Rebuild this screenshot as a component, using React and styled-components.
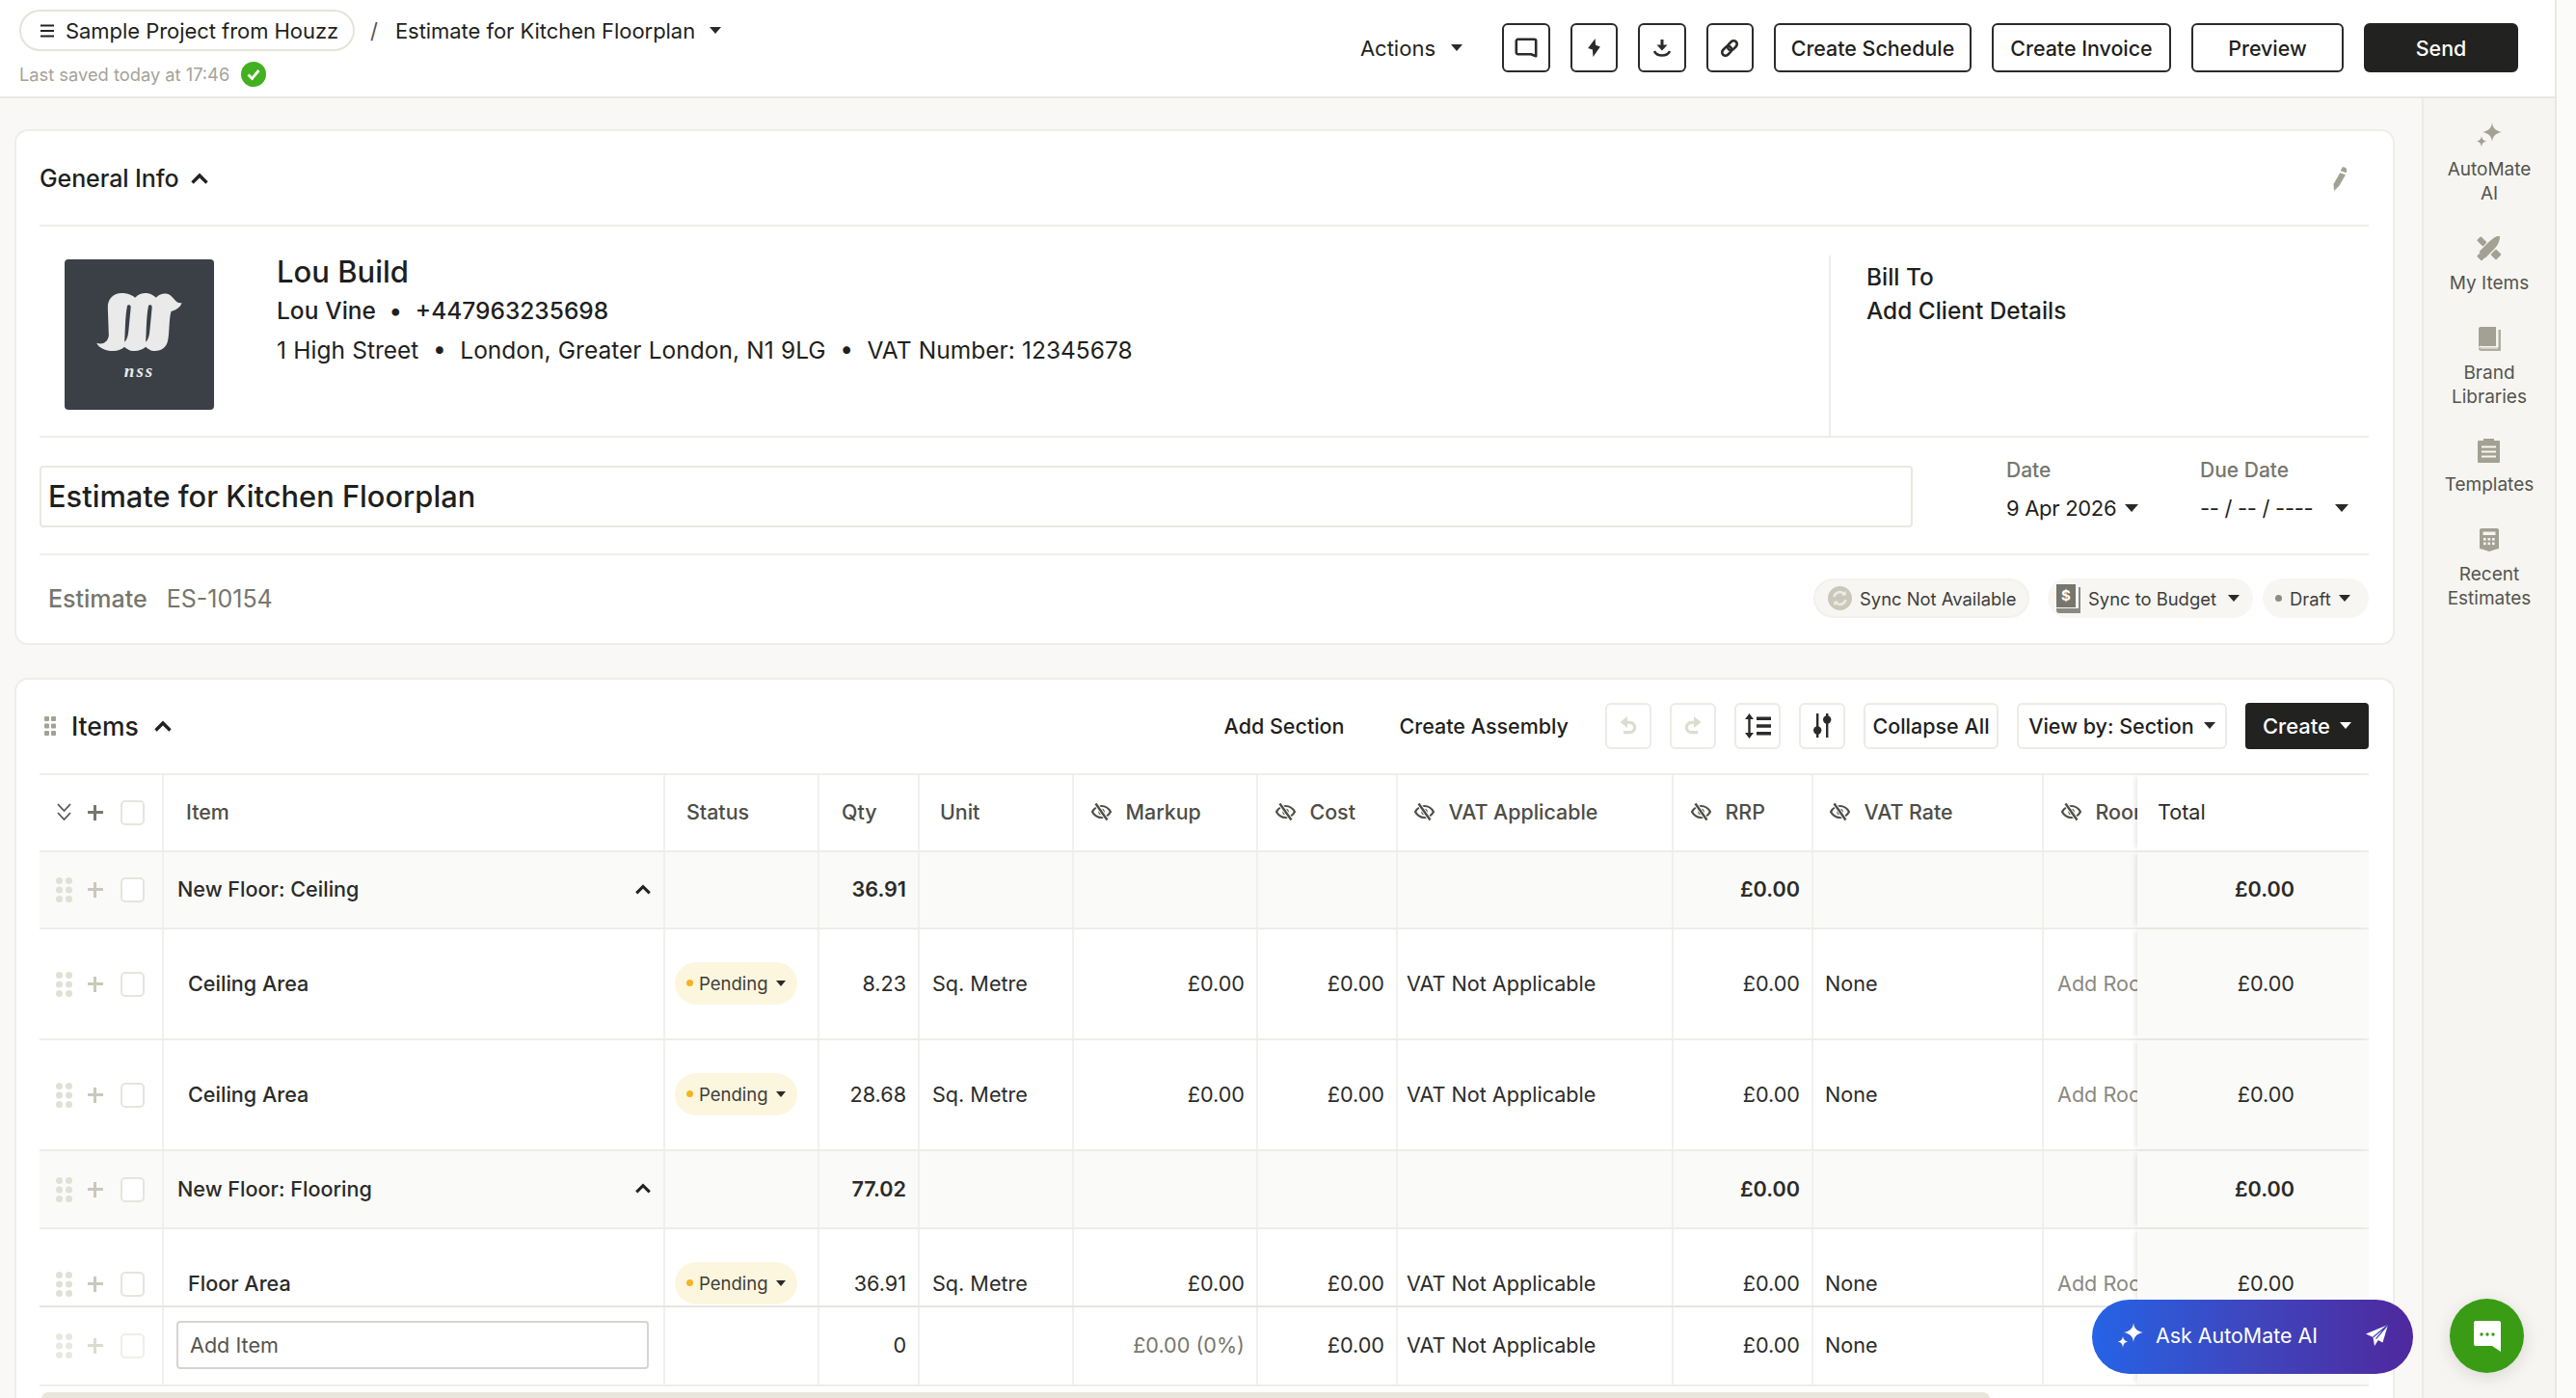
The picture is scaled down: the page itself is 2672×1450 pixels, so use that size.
import React from 'react';
import styled, { createGlobalStyle } from 'styled-components';

const Global = createGlobalStyle`
  html, body { margin: 0; padding: 0; height: 1450px; overflow: hidden; background: #fbfbfa; }
  * { box-sizing: border-box; }
  body { font-family: "Inter", "Noto Sans", sans-serif; color: #1f1f1d; }
`;

const Page = styled.div`display:flex;width:2672px;height:1450px;overflow:hidden;position:relative;`;
const Workspace = styled.div`width:2652px;height:1450px;display:flex;flex-direction:column;border-right:2px solid #e8e7e3;`;
const Header = styled.header`height:102px;flex:none;background:#fff;border-bottom:2px solid #e8e7e3;display:flex;justify-content:space-between;padding:10px 38px 0 20px;`;
const HeaderLeft = styled.div`display:flex;flex-direction:column;gap:10px;`;
const Crumbs = styled.div`display:flex;align-items:center;height:43px;`;
const ProjectPill = styled.div`height:43px;width:348px;border:2px solid #e6e4da;border-radius:22px;display:flex;align-items:center;padding-left:18px;gap:10px;font-size:22px;letter-spacing:-.05px;`;
const Slash = styled.span`margin:0 18px 0 16px;font-size:22px;color:#55544e;`;
const CrumbText = styled.span`font-size:22px;letter-spacing:-.05px;`;
const Caret = styled.span`display:inline-block;width:0;height:0;flex:none;border-left:${p=>p.$s||6}px solid transparent;border-right:${p=>p.$s||6}px solid transparent;border-top:${p=>(p.$s||6)+1}px solid ${p=>p.$c||'#2a2a28'};margin-left:${p=>p.$m||0}px;`;
const Saved = styled.div`display:flex;align-items:center;gap:12px;font-size:18.3px;color:#a5a398;height:28px;`;
const HeaderRight = styled.div`display:flex;align-items:center;height:51px;margin-top:14px;gap:21px;`;
const ActionsBtn = styled.div`display:flex;align-items:center;font-size:22px;margin-right:20px;`;
const OutBtn = styled.div`height:51px;width:${p=>p.$w}px;border:2px solid #2b2b29;border-radius:6px;display:flex;align-items:center;justify-content:center;background:#fff;font-size:21.4px;font-weight:500;`;
const SendBtn = styled(OutBtn)`background:#222220;border-color:#222220;color:#fff;`;

const Body = styled.div`flex:1;display:flex;min-height:0;background:#f9f8f6;`;
const Content = styled.main`flex:1;padding:32px 28px 0 15px;display:flex;flex-direction:column;gap:34px;min-width:0;`;
const Card = styled.section`background:#fff;border:2px solid #eeede8;border-radius:14px;padding:0 25px 0 24px;`;
const InfoCard = styled(Card)`height:535px;flex:none;padding-top:1px;`;
const InfoHead = styled.div`height:98px;display:flex;align-items:center;justify-content:space-between;border-bottom:2px solid #eeede9;padding-right:22px;`;
const Title = styled.div`display:flex;align-items:center;gap:12px;font-size:25px;font-weight:500;letter-spacing:-.1px;`;
const Company = styled.div`height:219px;display:flex;border-bottom:2px solid #eeede9;`;
const Logo = styled.div`width:155px;height:156px;margin:34px 0 0 26px;background:#3a4046;border-radius:4px;flex:none;display:flex;flex-direction:column;align-items:center;justify-content:flex-start;padding-top:34px;`;
const LogoText = styled.span`font-family:"Liberation Serif",serif;font-style:italic;font-weight:700;font-size:19px;letter-spacing:2px;color:#e9e9e9;margin-top:9px;line-height:22px;`;
const CompanyText = styled.div`width:1675px;padding:26px 0 0 65px;flex:none;`;
const CoName = styled.div`font-size:31px;font-weight:500;line-height:41px;`;
const CoLine = styled.div`font-size:${p=>p.$fs||24.5}px;font-weight:${p=>p.$w||400};line-height:41px;white-space:pre;word-spacing:.4px;`;
const BillTo = styled.div`margin-top:30px;height:189px;flex:1;border-left:2px solid #eeede9;padding:0 0 0 37px;font-size:24.4px;font-weight:500;line-height:35px;`;
const BillInner = styled.div`padding-top:5px;`;
const TitleRow = styled.div`height:122px;display:flex;border-bottom:2px solid #eeede9;`;
const TitleInput = styled.div`width:1943px;height:64px;margin-top:29px;border:2px solid #e9e8e2;border-radius:4px;display:flex;align-items:center;padding:0 0 2px 7px;font-size:30.8px;font-weight:500;`;
const DateCol = styled.div`width:${p=>p.$w}px;margin-left:${p=>p.$ml||0}px;padding-top:17px;`;
const DateLabel = styled.div`font-size:21px;font-weight:500;color:#77766c;line-height:34px;`;
const DateVal = styled.div`display:flex;align-items:center;font-size:22px;letter-spacing:-.3px;line-height:44px;color:${p=>p.$c||'#1f1f1d'};white-space:pre;`;
const MetaRow = styled.div`height:91px;display:flex;align-items:center;padding-bottom:2px;`;
const EstLabel = styled.span`font-size:25px;font-weight:500;color:#77766c;margin-left:9px;`;
const EstNum = styled.span`font-size:25px;color:#77766c;margin-left:20px;`;
const Pills = styled.div`margin-left:auto;display:flex;gap:${p=>p.$g||0}px;align-items:center;`;
const Pill = styled.div`height:41px;border-radius:21px;background:${p=>p.$bg||'#f7f6f3'};width:${p=>p.$w}px;display:flex;align-items:center;padding-left:${p=>p.$pl||10}px;gap:8px;font-size:18.4px;color:#3e3d39;margin-left:${p=>p.$ml||0}px;border:${p=>p.$b?'2px solid #f2f1ec':'0'};`;

const ItemsCard = styled(Card)`flex:1;border-bottom:0;border-radius:14px 14px 0 0;min-height:0;display:flex;flex-direction:column;`;
const ItemsBar = styled.div`height:97px;flex:none;display:flex;align-items:center;padding-bottom:2px;`;
const ItemsTitle = styled.div`display:flex;align-items:center;font-size:26.500px;font-weight:500;margin-left:4px;gap:15px;`;
const BarRight = styled.div`margin-left:auto;display:flex;align-items:center;height:48px;`;
const TextBtn = styled.span`font-size:21.5px;font-weight:500;margin-right:${p=>p.$mr}px;`;
const GhostBtn = styled.div`height:48px;width:${p=>p.$w}px;margin-right:${p=>p.$mr??19}px;border:2px solid #ecebe5;border-radius:6px;background:#fff;display:flex;align-items:center;justify-content:center;font-size:21.5px;font-weight:500;gap:10px;color:${p=>p.$c||'#1f1f1d'};`;
const CreateBtn = styled.div`height:48px;width:128px;background:#222220;border-radius:4px;color:#fff;display:flex;align-items:center;justify-content:center;gap:10px;font-size:22px;font-weight:500;`;

const cols = '129px 520px 160px 104px 160px 191px 145px 286px 145px 239px 97px 240px';
const Table = styled.div`width:2416px;border-top:2px solid #eeede9;flex:none;`;
const Row = styled.div`display:grid;grid-template-columns:${cols};height:${p=>p.$h}px;background:${p=>p.$bg||'#fff'};border-bottom:2px solid #eeede9;`;
const Cell = styled.div`border-right:2px solid #f1f0ec;display:flex;align-items:center;overflow:hidden;white-space:nowrap;font-size:21.6px;min-width:0;
  justify-content:${p=>p.$right?'flex-end':'flex-start'};
  padding:${p=>p.$right?'0 12px 2px 0':`0 0 2px ${p.$pl||0}px`};
  font-weight:${p=>p.$w||400};
  color:${p=>p.$c||'#2b2b29'};`;
const TotalCell = styled.div`margin-left:0;background:${p=>p.$bg||'#fafaf8'};box-shadow:-4px 0 5px -2px rgba(0,0,0,.1);display:flex;align-items:center;font-size:21.6px;font-weight:${p=>p.$w||400};z-index:1;color:#2b2b29;
  justify-content:${p=>p.$head?'flex-start':'flex-end'};padding:${p=>p.$head?'0 0 2px 21px':'0 77px 2px 0'};`;
const HeadCell = styled(Cell)`font-size:21.4px;color:#4e4d47;font-weight:500;gap:14.500px;`;
const Ctrl = styled.div`border-right:2px solid #f1f0ec;display:flex;align-items:center;padding-left:17px;`;
const Plus = styled.span`width:20px;height:20px;margin-left:14px;flex:none;position:relative;
  &::before,&::after{content:"";position:absolute;background:${p=>p.$c};}
  &::before{left:8px;top:2px;width:3px;height:16px;}
  &::after{top:8px;left:2px;height:3px;width:16px;}`;
const Check = styled.span`width:25px;height:26px;border:2px solid ${p=>p.$c||'#e6e5de'};border-radius:5px;background:#fff;margin-left:16px;flex:none;`;
const RowsClip = styled.div`height:470px;overflow:hidden;`;
const AddInput = styled.div`width:490px;height:50px;margin-left:13px;border:2px solid #d6d5d1;border-radius:4px;display:flex;align-items:center;padding-left:12px;color:#55544e;font-size:21.6px;background:#fff;`;
const StatusPill = styled.div`width:127px;height:44px;margin-left:10px;border-radius:22px;background:#fdf6df;display:flex;align-items:center;padding-left:12px;font-size:18.5px;color:#3e3d39;gap:6px;`;
const Dot = styled.span`width:7px;height:7px;border-radius:50%;background:${p=>p.$c||'#f6b321'};flex:none;`;
const ScrollTrack = styled.div`height:14px;margin-top:6px;width:2021px;margin-left:2px;background:#e8e6dd;border-radius:7px;flex:none;`;

const Side = styled.aside`width:138px;flex:none;background:#f6f5f2;border-left:2px solid #ecebe7;padding-top:21px;display:flex;flex-direction:column;align-items:center;`;
const SideItem = styled.div`display:flex;flex-direction:column;align-items:center;text-align:center;font-size:19px;line-height:25px;color:#55544e;margin-bottom:${p=>p.$mb}px;`;
const SideIcon = styled.div`height:34px;display:flex;align-items:center;justify-content:center;margin-bottom:6px;`;

const AskBtn = styled.div`position:absolute;left:2170px;top:1348px;width:333px;height:77px;border-radius:39px;background:linear-gradient(90deg,#2563e6 0%,#3f46bd 50%,#4f289e 100%);color:#fff;display:flex;align-items:center;padding:0 0 3px 26px;font-size:21.4px;z-index:3;gap:12px;`;
const AskSend = styled.span`margin-left:auto;margin-right:24px;display:flex;`;
const ChatBtn = styled.div`position:absolute;left:2541px;top:1347px;width:77px;height:77px;border-radius:50%;background:#3a9c14;box-shadow:0 4px 18px rgba(0,0,0,.12);display:flex;align-items:center;justify-content:center;z-index:3;`;

const Chevron = ({s=20,c='#222'}) => (
  <svg width={s} height={s*0.7} viewBox="0 0 20 14" style={{flex:'none'}}><path d="M2.500 11.500 10 4l7.500 7.500" fill="none" stroke={c} strokeWidth="3.400"/></svg>
);
const MenuIcon = () => (<svg width="18" height="16" viewBox="0 0 18 16" style={{flex:'none'}}><path d="M2 2.500h14M2 8h14M2 13.500h14" stroke="#222" strokeWidth="2"/></svg>);
const SavedCheck = () => (<svg width="26" height="26" viewBox="0 0 26 26"><circle cx="13" cy="13" r="13" fill="#43b01f"/><path d="M7.500 13.500l4 4 7-8.500" fill="none" stroke="#fff" strokeWidth="2.800"/></svg>);
const CommentI = () => (<svg width="24" height="22" viewBox="0 0 24 22"><path d="M3.500 1.800h17a1.700 1.700 0 0 1 1.700 1.700v15.800l-5.200-2.100H3.500a1.700 1.700 0 0 1-1.700-1.700V3.500a1.700 1.700 0 0 1 1.700-1.700z" fill="none" stroke="#2b2b29" strokeWidth="2.600" strokeLinejoin="round"/></svg>);
const BoltI = () => (<svg width="13" height="19" viewBox="0 0 12 18"><path d="M7 0 0 9.500l4.500 1.500L5 18l7-10-4.500-1.500z" fill="#2b2b29"/></svg>);
const DownloadI = () => (<svg width="18" height="18" viewBox="0 0 18 18"><path d="M7.500 0h3v5.500h4L9 11.500 3.500 5.500h4z" fill="#2b2b29"/><path d="M1 12c1.500 3 4 4.500 8 4.500s6.500-1.500 8-4.500" fill="none" stroke="#2b2b29" strokeWidth="2.600"/></svg>);
const LinkI = () => (<svg width="20" height="20" viewBox="0 0 20 20" fill="none" stroke="#2b2b29" strokeWidth="2.600"><g transform="rotate(-45 10 10)"><rect x="0.500" y="6.500" width="11" height="7" rx="3.500"/><rect x="8.500" y="6.500" width="11" height="7" rx="3.500"/></g></svg>);
const PencilI = () => (<svg width="16" height="25" viewBox="0 0 16 25"><path d="M10.500.500c2.500-1 5 .8 4.700 3.200l-.6 2.500-5.800-1.900zM8.200 6.300l5.800 1.900L7.200 20 2 25l-.5-7z" fill="#a3a193"/></svg>);
const Drag = ({c='#e1e0d6'}) => (
  <svg width="17" height="26" viewBox="0 0 17 26" style={{flex:'none'}}>
    {[0,1,2].flatMap(r=>[0,1].map(k=><circle key={`${r}${k}`} cx={3.500+k*10} cy={3.500+r*9.500} r="3.500" fill={c}/>))}
  </svg>
);
const SmallDrag = () => (
  <svg width="14" height="22" viewBox="0 0 14 22" style={{flex:'none'}}>
    {[0,1,2].flatMap(r=>[0,1].map(k=><rect key={`${r}${k}`} x={1+k*7} y={1+r*7.500} width="5" height="5" rx="1" fill="#a3a193"/>))}
  </svg>
);
const DblChevron = () => (<svg width="17" height="22" viewBox="0 0 17 22" fill="none" stroke="#55544e" strokeWidth="1.800" style={{flex:'none'}}><path d="M2 2l6.500 7L15 2M2 11l6.500 7L15 11"/></svg>);
const EyeOff = () => (
  <svg width="21" height="20" viewBox="0 0 21 20" style={{flex:'none'}}>
    <path d="M1 10c2.300-4 5.600-6 9.500-6s7.200 2 9.500 6c-2.300 4-5.600 6-9.500 6S3.300 14 1 10z" fill="none" stroke="#4e4d47" strokeWidth="2.200"/>
    <circle cx="10.500" cy="10" r="3.200" fill="#4e4d47"/>
    <path d="M4.500 1.500l12 17" stroke="#fff" strokeWidth="4.500"/>
    <path d="M4.500 1.500l12 17" stroke="#4e4d47" strokeWidth="2.400"/>
  </svg>
);
const Undo = ({flip}) => (<svg width="20" height="24" viewBox="0 0 20 24" style={{transform:flip?'scaleX(-1)':'none'}}><path d="M9 2 1.500 8 9 14V10h2.500a3.500 3.500 0 0 1 0 7H5v3.200h6.500a6.700 6.700 0 0 0 0-13.400H9z" fill="#dddcd0"/></svg>);
const RowHeightI = () => (<svg width="30" height="28" viewBox="0 0 30 28"><path d="M6.500 1 2 7h3.300v14H2l4.500 6 4.500-6H7.700V7H11z" fill="#2b2b29"/><path d="M14 4.500h15v3.400H14zM14 12.300h15v3.400H14zM14 20.100h15v3.400H14z" fill="#2b2b29"/></svg>);
const SortI = () => (<svg width="20" height="26" viewBox="0 0 20 26" fill="#2b2b29"><rect x="4" y="0" width="2.400" height="25"/><rect x="14" y="0" width="2.400" height="25"/><circle cx="5.200" cy="17.500" r="4.200"/><circle cx="15.200" cy="6.500" r="4.200"/></svg>);
const Sparkle = ({c='#a3a193',s=28}) => (<svg width={s} height={s} viewBox="0 0 28 28" style={{flex:'none'}}><path d="M17 1c.6 5.400 3.200 8.600 10 10-6.800 1.400-9.400 4.600-10 10-.6-5.400-3.200-8.600-10-10 6.800-1.400 9.400-4.600 10-10z" fill={c}/><path d="M6 15c.3 2.900 1.600 4.600 5 5.500-3.400.9-4.700 2.600-5 6.500-.3-3.900-1.600-5.600-5-6.500 3.400-.9 4.700-2.600 5-5.500z" fill={c}/></svg>);
const ItemsI = () => (<svg width="27" height="26" viewBox="0 0 27 26" fill="#a3a193"><path d="M26 0c.3 5-1.700 10-5.600 14L11 23.500 4.500 17 14 7.600C18 3.700 21.500 1 26 0z" transform="translate(-1 -1)"/><rect x="2" y="2" width="9" height="6" rx="1" transform="rotate(45 6 5)"/><rect x="17" y="15" width="8" height="8" rx="1" transform="rotate(45 21 19)"/><rect x="3" y="17" width="7" height="7" rx="1" transform="rotate(45 6 20)"/></svg>);
const BookI = () => (<svg width="25" height="25" viewBox="0 0 25 25"><path d="M3 0h16v20H4.500A3.500 3.500 0 0 0 1 21V2a2 2 0 0 1 2-2z" fill="#a3a193"/><path d="M21.500 3H24v22H3.500C2 25 1 24 1 22.500 1 21.600 2 21.200 3.500 21.200h18z" fill="#a3a193" opacity=".85"/><path d="M3 22h18" stroke="#f6f5f2" strokeWidth="1"/></svg>);
const ClipI = () => (<svg width="23" height="25" viewBox="0 0 23 25"><path d="M1 2h5V0h11v2h5a1 1 0 0 1 1 1v21a1 1 0 0 1-1 1H1a1 1 0 0 1-1-1V3a1 1 0 0 1 1-1z" fill="#a3a193"/><path d="M4 8.500h15M4 13.500h15M4 18.500h15" stroke="#f6f5f2" strokeWidth="2"/></svg>);
const CalcI = () => (<svg width="20" height="24" viewBox="0 0 20 24"><path d="M2 0h16a2 2 0 0 1 2 2v19l-4 1-6 2-6-2-4-1V2a2 2 0 0 1 2-2z" fill="#a3a193"/><rect x="3.500" y="3.500" width="13" height="3.500" fill="#f6f5f2"/>{[0,1,2].flatMap(k=>[0,1].map(r=><rect key={`${k}${r}`} x={4+k*4.500} y={10+r*4.500} width="2.600" height="2.600" fill="#f6f5f2"/>))}</svg>);
const SyncI = () => (<svg width="25" height="25" viewBox="0 0 25 25"><circle cx="12.500" cy="12.500" r="12.500" fill="#c9c8ba"/><path d="M6.500 11a6.200 6.200 0 0 1 11-2.500M18.500 14a6.200 6.200 0 0 1-11 2.500" fill="none" stroke="#ecebe4" strokeWidth="2.400"/><path d="M18.800 4.500v5h-5zM6.200 20.500v-5h5z" fill="#ecebe4"/></svg>);
const BudgetI = () => (<svg width="25" height="30" viewBox="0 0 25 30"><path d="M0 0h20v24H0z" fill="#77766c"/><path d="M23 3h2v27H3a3 3 0 0 1-3-3v-2h23z" fill="#8b8a80"/><text x="10" y="17" textAnchor="middle" fontSize="15" fontWeight="700" fill="#fff" fontFamily="Inter, sans-serif">$</text></svg>);
const PlaneI = () => (<svg width="26" height="26" viewBox="0 0 26 26"><path d="M24 2 1 11.500l7.500 3.500L10 24l3.800-6 4.700 2.500z" fill="#fff"/><path d="M8.500 15 24 2 11.500 16.700" fill="none" stroke="#3f46bd" strokeWidth="1.200"/></svg>);
const ChatI = () => (<svg width="30" height="34" viewBox="0 0 30 34"><path d="M3 1h24a2 2 0 0 1 2 2v30l-9-6H3a2 2 0 0 1-2-2V3a2 2 0 0 1 2-2z" fill="#fff"/><circle cx="9" cy="15" r="1.700" fill="#3a9c14"/><circle cx="15" cy="15" r="1.700" fill="#3a9c14"/><circle cx="21" cy="15" r="1.700" fill="#3a9c14"/></svg>);

const LogoMark = () => (
  <svg width="89" height="62" viewBox="183 155 266 186" style={{flex:'none'}}>
    <path fill="#eaeaea" d="M183 313C200 320 218 312 221 290L218 205C216 180 232 158 262 158C280 158 295 165 303 172C312 162 325 158 335 158C350 158 360 165 368 172C378 162 390 158 402 160C420 162 430 195 448 188C444 205 425 212 415 215C408 240 410 280 405 305C400 328 385 338 365 338C350 338 342 330 336 325C328 332 315 338 300 338C285 338 275 330 270 325C262 332 250 338 235 338C210 338 190 328 183 313Z"/>
    <path fill="#3a4046" d="M283 195C290 195 290 200 289 208L282 280C280 295 276 305 270 310C272 280 272 230 278 200C279 196 281 195 283 195Z"/>
    <path fill="#3a4046" d="M349 195C356 195 356 200 355 208L348 280C346 295 342 305 336 310C338 280 338 230 344 200C345 196 347 195 349 195Z"/>
  </svg>
);

const ControlCells = ({drag='#e1e0d6',plus='#c9c8ba',check}) => (
  <Ctrl><Drag c={drag}/><Plus $c={plus}/><Check $c={check}/></Ctrl>
);
const AmountRow = ({kind, name, qty, h}) => {
  const section = kind === 'section';
  return (
    <Row $h={h} $bg={section?'#fafaf8':'#fff'}>
      <ControlCells />
      {section
        ? <Cell $pl={14} $w={500} style={{justifyContent:'space-between',paddingRight:12}}>{name}<Chevron s={18}/></Cell>
        : <Cell $pl={25} $w={500}>{name}</Cell>}
      <Cell>{!section && <StatusPill><Dot/>Pending<Caret $s={5} $m={2}/></StatusPill>}</Cell>
      <Cell $right $w={section?600:400}>{qty}</Cell>
      <Cell $pl={13}>{!section && 'Sq. Metre'}</Cell>
      <Cell $right>{!section && '£0.00'}</Cell>
      <Cell $right>{!section && '£0.00'}</Cell>
      <Cell $pl={9}>{!section && 'VAT Not Applicable'}</Cell>
      <Cell $right $w={section?600:400}>£0.00</Cell>
      <Cell $pl={12}>{!section && 'None'}</Cell>
      <Cell $pl={14} $c="#8a897f" style={{borderRight:0}}>{!section && 'Add Room'}</Cell>
      <TotalCell $w={section?600:400}>£0.00</TotalCell>
    </Row>
  );
};

export default function App(){
  const head = [['Status',0,22],['Qty',0,23],['Unit',0,21],['Markup',1,18],['Cost',1,18],['VAT Applicable',1,17],['RRP',1,18],['VAT Rate',1,17],['Room',1,18]];
  return (
    <Page>
      <Global/>
      <Workspace>
        <Header>
          <HeaderLeft>
            <Crumbs>
              <ProjectPill><MenuIcon/>Sample Project from Houzz</ProjectPill>
              <Slash>/</Slash>
              <CrumbText>Estimate for Kitchen Floorplan</CrumbText>
              <Caret $m={15}/>
            </Crumbs>
            <Saved>Last saved today at 17:46 <SavedCheck/></Saved>
          </HeaderLeft>
          <HeaderRight>
            <ActionsBtn>Actions<Caret $m={16}/></ActionsBtn>
            <OutBtn $w={49.5}><CommentI/></OutBtn>
            <OutBtn $w={49.5}><BoltI/></OutBtn>
            <OutBtn $w={49.5}><DownloadI/></OutBtn>
            <OutBtn $w={49.5}><LinkI/></OutBtn>
            <OutBtn $w={205}>Create Schedule</OutBtn>
            <OutBtn $w={186}>Create Invoice</OutBtn>
            <OutBtn $w={158}>Preview</OutBtn>
            <SendBtn $w={160}>Send</SendBtn>
          </HeaderRight>
        </Header>
        <Body>
          <Content>
            <InfoCard>
              <InfoHead>
                <Title>General Info <Chevron/></Title>
                <PencilI/>
              </InfoHead>
              <Company>
                <Logo><LogoMark/><LogoText>nss</LogoText></Logo>
                <CompanyText>
                  <CoName>Lou Build</CoName>
                  <CoLine $fs={24.5} $w={500}>{'Lou Vine  •  +447963235698'}</CoLine>
                  <CoLine>{'1 High Street  •  London, Greater London, N1 9LG  •  VAT Number: 12345678'}</CoLine>
                </CompanyText>
                <BillTo><BillInner>Bill To<br/>Add Client Details</BillInner></BillTo>
              </Company>
              <TitleRow>
                <TitleInput>Estimate for Kitchen Floorplan</TitleInput>
                <DateCol $w={201} $ml={97}>
                  <DateLabel>Date</DateLabel>
                  <DateVal>9 Apr 2026<Caret $m={9} $s={7}/></DateVal>
                </DateCol>
                <DateCol $w={165}>
                  <DateLabel>Due Date</DateLabel>
                  <DateVal>{'-- / -- / ----'}<Caret $m={23} $s={7}/></DateVal>
                </DateCol>
              </TitleRow>
              <MetaRow>
                <EstLabel>Estimate</EstLabel>
                <EstNum>ES-10154</EstNum>
                <Pills>
                  <Pill $w={224} $b $pl={13}><SyncI/>Sync Not Available</Pill>
                  <Pill $w={213} $ml={19} $pl={9}><BudgetI/>Sync to Budget<Caret $s={6} $m={4}/></Pill>
                  <Pill $w={110} $ml={10} $pl={13}><Dot $c="#8e8d83"/>Draft<Caret $s={6}/></Pill>
                </Pills>
              </MetaRow>
            </InfoCard>
            <ItemsCard>
              <ItemsBar>
                <ItemsTitle><SmallDrag/>Items<Chevron s={20}/></ItemsTitle>
                <BarRight>
                  <TextBtn $mr={57}>Add Section</TextBtn>
                  <TextBtn $mr={38}>Create Assembly</TextBtn>
                  <GhostBtn $w={48}><Undo/></GhostBtn>
                  <GhostBtn $w={48}><Undo flip/></GhostBtn>
                  <GhostBtn $w={48}><RowHeightI/></GhostBtn>
                  <GhostBtn $w={48}><SortI/></GhostBtn>
                  <GhostBtn $w={140}>Collapse All</GhostBtn>
                  <GhostBtn $w={218}>View by: Section<Caret $s={6}/></GhostBtn>
                  <CreateBtn>Create<Caret $s={6} $c="#fff"/></CreateBtn>
                </BarRight>
              </ItemsBar>
              <Table>
                <Row $h={80}>
                  <Ctrl><DblChevron/><Plus $c="#77766c"/><Check/></Ctrl>
                  <HeadCell $pl={23}>Item</HeadCell>
                  {head.map(([t,eye,pl])=>(
                    <HeadCell key={t} $pl={pl} style={t==='Room'?{borderRight:0}:undefined}>{eye?<EyeOff/>:null}{t}</HeadCell>
                  ))}
                  <TotalCell $head $bg="#fff">Total</TotalCell>
                </Row>
                <RowsClip>
                  <AmountRow kind="section" name="New Floor: Ceiling" qty="36.91" h={80}/>
                  <AmountRow name="Ceiling Area" qty="8.23" h={115}/>
                  <AmountRow name="Ceiling Area" qty="28.68" h={115}/>
                  <AmountRow kind="section" name="New Floor: Flooring" qty="77.02" h={81}/>
                  <AmountRow name="Floor Area" qty="36.91" h={115}/>
                </RowsClip>
                <Row $h={84} style={{borderTop:'2px solid #e6e5e1'}}>
                  <ControlCells drag="#e9e8e0" plus="#dddcd0" check="#efeee8"/>
                  <Cell><AddInput>Add Item</AddInput></Cell>
                  <Cell/>
                  <Cell $right>0</Cell>
                  <Cell/>
                  <Cell $right $c="#77766c">£0.00 (0%)</Cell>
                  <Cell $right>£0.00</Cell>
                  <Cell $pl={9}>VAT Not Applicable</Cell>
                  <Cell $right>£0.00</Cell>
                  <Cell $pl={12}>None</Cell>
                  <Cell style={{borderRight:0}}/>
                  <TotalCell/>
                </Row>
              </Table>
              <ScrollTrack/>
            </ItemsCard>
          </Content>
          <Side>
            <SideItem $mb={28}><SideIcon><Sparkle/></SideIcon>AutoMate<br/>AI</SideItem>
            <SideItem $mb={28}><SideIcon><ItemsI/></SideIcon>My Items</SideItem>
            <SideItem $mb={26}><SideIcon><BookI/></SideIcon>Brand<br/>Libraries</SideItem>
            <SideItem $mb={28}><SideIcon><ClipI/></SideIcon>Templates</SideItem>
            <SideItem $mb={0}><SideIcon><CalcI/></SideIcon>Recent<br/>Estimates</SideItem>
          </Side>
        </Body>
      </Workspace>
      <AskBtn><Sparkle c="#fff" s={28}/>Ask AutoMate AI<AskSend><PlaneI/></AskSend></AskBtn>
      <ChatBtn><ChatI/></ChatBtn>
    </Page>
  );
}
